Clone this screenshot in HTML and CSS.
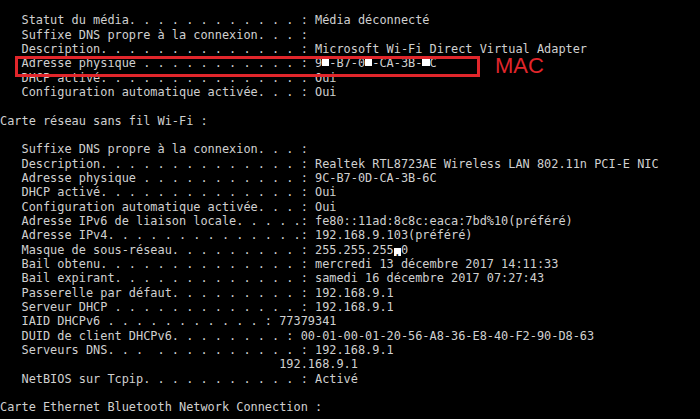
FILE: index.html
```html
<!DOCTYPE html>
<html lang="fr">
<head>
<meta charset="utf-8">
<title>ipconfig /all</title>
<link rel="stylesheet" href="styles.css">
</head>
<body>
<main class="console">
<div class="ln">   Statut du média. . . . . . . . . . . . : Média déconnecté</div>
<div class="ln">   Suffixe DNS propre à la connexion. . . :</div>
<div class="ln">   Description. . . . . . . . . . . . . . : Microsoft Wi-Fi Direct Virtual Adapter</div>
<div class="ln ln-mark">   Adresse physique . . . . . . . . . . . : 9<span class="mask"> </span>-B7-0<span class="mask"> </span>-CA-3B-<span class="mask"> </span>C<span class="mark-box"></span><span class="mark-label">MAC</span></div>
<div class="ln">   DHCP activé. . . . . . . . . . . . . . : Oui</div>
<div class="ln">   Configuration automatique activée. . . : Oui</div>
<div class="ln"> </div>
<div class="ln">Carte réseau sans fil Wi-Fi :</div>
<div class="ln"> </div>
<div class="ln">   Suffixe DNS propre à la connexion. . . :</div>
<div class="ln">   Description. . . . . . . . . . . . . . : Realtek RTL8723AE Wireless LAN 802.11n PCI-E NIC</div>
<div class="ln">   Adresse physique . . . . . . . . . . . : 9C-B7-0D-CA-3B-6C</div>
<div class="ln">   DHCP activé. . . . . . . . . . . . . . : Oui</div>
<div class="ln">   Configuration automatique activée. . . : Oui</div>
<div class="ln">   Adresse IPv6 de liaison locale. . . . .: fe80::11ad:8c8c:eaca:7bd%10(préféré)</div>
<div class="ln">   Adresse IPv4. . . . . . . . . . . . . .: 192.168.9.103(préféré)</div>
<div class="ln">   Masque de sous-réseau. . . . . . . . . : 255.255.255<span class="cursor">.</span>0</div>
<div class="ln">   Bail obtenu. . . . . . . . . . . . . . : mercredi 13 décembre 2017 14:11:33</div>
<div class="ln">   Bail expirant. . . . . . . . . . . . . : samedi 16 décembre 2017 07:27:43</div>
<div class="ln">   Passerelle par défaut. . . . . . . . . : 192.168.9.1</div>
<div class="ln">   Serveur DHCP . . . . . . . . . . . . . : 192.168.9.1</div>
<div class="ln">   IAID DHCPv6 . . . . . . . . . . . : 77379341</div>
<div class="ln">   DUID de client DHCPv6. . . . . . . . : 00-01-00-01-20-56-A8-36-E8-40-F2-90-D8-63</div>
<div class="ln">   Serveurs DNS. . .  . . . . . . . . . . : 192.168.9.1</div>
<div class="ln">                                       192.168.9.1</div>
<div class="ln">   NetBIOS sur Tcpip. . . . . . . . . . . : Activé</div>
<div class="ln"> </div>
<div class="ln">Carte Ethernet Bluetooth Network Connection :</div>
</main>
</body>
</html>
```
FILE: styles.css
```css
html, body {
  margin: 0;
  padding: 0;
  background: #000;
}

body {
  width: 700px;
  height: 419px;
  overflow: hidden;
}

.console {
  display: flex;
  flex-direction: column;
  padding-top: 13.4px;
  font-family: "DejaVu Sans Mono", "Liberation Mono", monospace;
  font-size: 11.9px;
  line-height: 14.33px;
  color: #d0d0d0;
}

.ln {
  white-space: pre;
  height: 14.33px;
}

.ln-mark {
  position: relative;
}

.mask {
  display: inline-block;
  width: 1ch;
  height: 8px;
  background: #ffffff;
  vertical-align: -2px;
}

.cursor {
  display: inline-block;
  width: 1ch;
  height: 8px;
  line-height: 8px;
  background: #ffffff;
  color: #000;
  vertical-align: -2px;
}

.mark-box {
  position: absolute;
  left: 15px;
  top: 0;
  width: 465px;
  height: 21px;
  box-sizing: border-box;
  border: 3px solid #e1262b;
}

.mark-label {
  position: absolute;
  left: 495px;
  top: 2px;
  font-family: "Liberation Sans", Arial, sans-serif;
  font-size: 22px;
  line-height: 16px;
  color: #e1262b;
}
```
